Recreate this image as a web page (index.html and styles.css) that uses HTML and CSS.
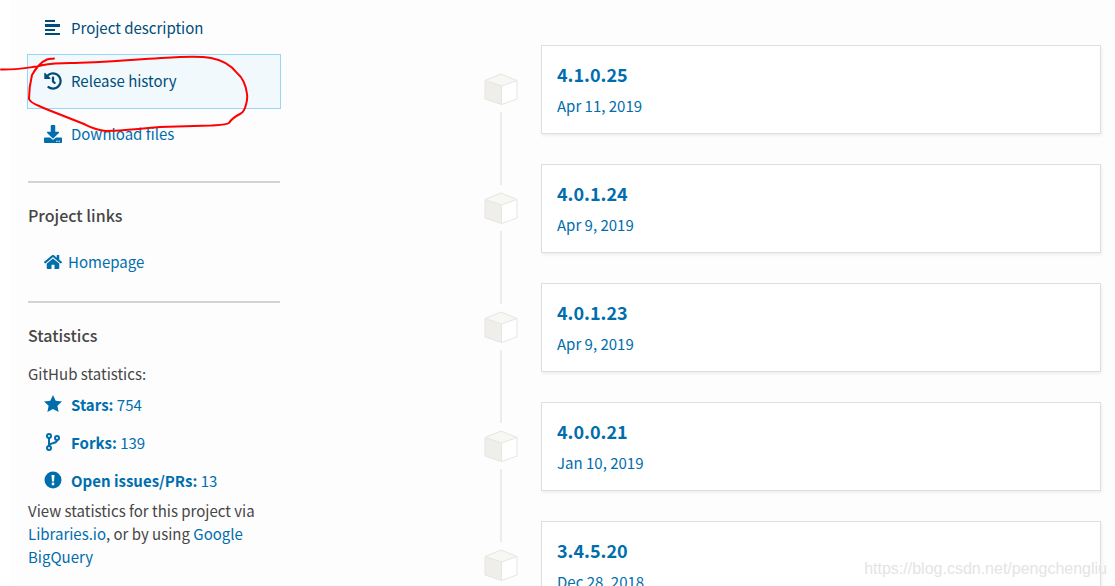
FILE: index.html
```html
<!DOCTYPE html>
<html lang="en">

<head>
    <meta charset="UTF-8">
    <meta name="viewport" content="width=device-width, initial-scale=1.0">
    <title>Release history</title>
    <link rel="stylesheet" href="styles.css">
</head>

<body>
    <!-- Shapes used more than once -->
    <svg class="sprite" aria-hidden="true">
        <symbol id="cube" viewBox="0 0 34 33">
            <path d="M1 7.500 17.500 13v18.500L1 26z" fill="#efeeea" />
            <path d="M17.500 13 33 7.500V26l-15.500 5.500z" fill="#fff" />
            <path d="M17 1 33 7.500 17.500 13 1 7.500z" fill="#f7f7f4" />
            <path d="M17 1 33 7.500V26l-15.500 5.500L1 26V7.500zM1 7.500 17.500 13 33 7.500M17.500 13v18" fill="none" stroke="#e5e5e1" />
        </symbol>
    </svg>

    <div class="page">
        <aside class="sidebar">
            <nav class="tabs">
                <a class="tab tab-dark" href="#description">
                    <svg class="icon" viewBox="0 0 18 18"><path d="M1 1h10v2H1zM1 5h15v3H1zM1 10h10v2H1zM1 14h15v2H1z" /></svg>
                    Project description
                </a>
                <a class="tab tab-dark tab-active" href="#history">
                    <svg class="icon" viewBox="0 0 512 512"><path d="M504 255.500c.3 136.600-111.200 248.400-247.800 248.500-59 0-113.200-20.500-155.800-54.900-11.100-8.900-11.900-25.500-1.800-35.600l11.300-11.300c8.600-8.600 22.400-9.600 31.900-2C173.100 425.100 212.800 440 256 440c101.700 0 184-82.300 184-184 0-101.700-82.300-184-184-184-48.800 0-93.100 19-126.100 49.900l50.800 50.800c10.100 10.100 2.900 27.300-11.300 27.300H24c-8.800 0-16-7.200-16-16V38.600c0-14.300 17.200-21.400 27.300-11.300l49.400 49.400C129.200 34.100 189.600 8 256 8c136.800 0 247.700 110.800 248 247.500zm-180.900 78.800 9.800-12.600c8.100-10.500 6.300-25.500-4.200-33.700L288 256.300V152c0-13.300-10.700-24-24-24h-16c-13.300 0-24 10.700-24 24v135.700l65.400 50.900c10.500 8.100 25.500 6.300 33.700-4.300z" /></svg>
                    Release history
                </a>
                <a class="tab" href="#files">
                    <svg class="icon" viewBox="0 0 512 512"><path d="M216 0h80c13.300 0 24 10.700 24 24v168h87.700c17.800 0 26.700 21.500 14.100 34.100L269.700 378.300c-7.500 7.500-19.800 7.500-27.300 0L90.100 226.100c-12.600-12.600-3.700-34.100 14.100-34.100H192V24c0-13.300 10.700-24 24-24zm296 376v112c0 13.300-10.700 24-24 24H24c-13.300 0-24-10.700-24-24V376c0-13.300 10.700-24 24-24h146.700l49 49c20.100 20.100 52.500 20.100 72.600 0l49-49H488c13.300 0 24 10.700 24 24zm-124 88c0-11-9-20-20-20s-20 9-20 20 9 20 20 20 20-9 20-20zm64 0c0-11-9-20-20-20s-20 9-20 20 9 20 20 20 20-9 20-20z" /></svg>
                    Download files
                </a>
            </nav>

            <section class="section">
                <h2>Project links</h2>
                <a class="home-link" href="#home">
                    <svg class="icon" viewBox="0 0 576 512"><path d="M488 312.700V456c0 13.300-10.700 24-24 24H348c-6.600 0-12-5.400-12-12V356c0-6.600-5.400-12-12-12h-72c-6.600 0-12 5.400-12 12v112c0 6.600-5.400 12-12 12H112c-13.300 0-24-10.700-24-24V312.700c0-3.600 1.600-7 4.400-9.300l188-154.800c4.400-3.600 10.800-3.600 15.300 0l188 154.800c2.700 2.300 4.300 5.700 4.300 9.300zm83.600-60.900L488 182.900V44.400c0-6.600-5.400-12-12-12h-56c-6.600 0-12 5.400-12 12V117l-89.500-73.700c-17.700-14.600-43.300-14.600-61 0L4.400 251.800c-5.100 4.200-5.800 11.800-1.600 16.900l25.500 31c4.200 5.100 11.800 5.800 16.900 1.600l235.200-193.700c4.400-3.600 10.800-3.600 15.300 0l235.200 193.700c5.100 4.200 12.700 3.500 16.900-1.600l25.500-31c4.200-5.200 3.400-12.700-1.700-16.900z" /></svg>
                    Homepage
                </a>
            </section>

            <section class="section">
                <h2>Statistics</h2>
                <p>GitHub statistics:</p>
                <ul class="stats">
                    <li>
                        <a class="stat" href="#stars">
                            <svg class="icon" viewBox="0 0 18 18"><path d="M9 0l2.700 5.700 6.300.8-4.600 4.300 1.200 6.300L9 14.100l-5.600 3 1.200-6.300L0 6.500l6.300-.8z" /></svg>
                            <span><strong>Stars:</strong> 754</span>
                        </a>
                    </li>
                    <li>
                        <a class="stat" href="#forks">
                            <svg class="icon" viewBox="0 0 18 18"><g fill="none" stroke="currentColor" stroke-width="2"><circle cx="5" cy="3" r="2" /><circle cx="5" cy="15" r="2" /><circle cx="13" cy="5" r="2" /><path d="M5 5v8M13 7c0 4-5 2-8 5" /></g></svg>
                            <span><strong>Forks:</strong> 139</span>
                        </a>
                    </li>
                    <li>
                        <a class="stat" href="#issues">
                            <svg class="icon" viewBox="0 0 18 18"><circle cx="9" cy="9" r="8.500" /><path d="M7.500 4h3L10 10.500H8z" fill="#fff" /><circle cx="9" cy="13" r="1.400" fill="#fff" /></svg>
                            <span><strong>Open issues/PRs:</strong> 13</span>
                        </a>
                    </li>
                </ul>
                <p>View statistics for this project via <a href="#libraries">Libraries.io</a>, or by using <a href="#bigquery">Google BigQuery</a></p>
            </section>
        </aside>

        <main class="releases">
            <div class="release">
                <div class="node"><svg class="cube"><use href="#cube" /></svg></div>
                <a class="card" href="#r1"><span class="version">4.1.0.25</span><time>Apr 11, 2019</time></a>
            </div>
            <div class="release">
                <div class="node"><svg class="cube"><use href="#cube" /></svg></div>
                <a class="card" href="#r2"><span class="version">4.0.1.24</span><time>Apr 9, 2019</time></a>
            </div>
            <div class="release">
                <div class="node"><svg class="cube"><use href="#cube" /></svg></div>
                <a class="card" href="#r3"><span class="version">4.0.1.23</span><time>Apr 9, 2019</time></a>
            </div>
            <div class="release">
                <div class="node"><svg class="cube"><use href="#cube" /></svg></div>
                <a class="card" href="#r4"><span class="version">4.0.0.21</span><time>Jan 10, 2019</time></a>
            </div>
            <div class="release">
                <div class="node"><svg class="cube"><use href="#cube" /></svg></div>
                <a class="card" href="#r5"><span class="version">3.4.5.20</span><time>Dec 28, 2018</time></a>
            </div>
        </main>
    </div>

    <!-- Hand-drawn marker around the active tab -->
    <svg class="marker" viewBox="0 0 260 140" aria-hidden="true">
        <path d="M1 69.500C14 70 25 68 37 66.500C48 63 56 63.500 70 63C98 63 140 59 180 57C192 56.500 203 56.500 211 58C222 60 231 65 237 73C243 78 246 86 247 94C248 101 246 104 245 108C243 111 244 112 240 114C236 116 232 118 229 123C226 125 218 125 211 125.500L160 127C140 129 122 131 106 131C95 130 90 127 84 124L46 109C38 105 31 104 29 99C29 91 30 83 32 75C36 68 41 62 47 59.500C50 58.500 52 59 54 58.500" />
    </svg>
    <div class="watermark">https://blog.csdn.net/pengchengliu</div>
</body>

</html>
```
FILE: styles.css
```css
* {
    box-sizing: border-box;
}

body {
    margin: 0;
    height: 100vh;
    overflow: hidden;
    position: relative;
    background-color: #fff;
    color: #464646;
    font-family: "Source Sans Pro", "Noto Sans CJK SC", sans-serif;
    font-size: 15px;
    line-height: 23px;
}

a {
    color: #006dad;
    text-decoration: none;
}

h2 {
    margin: 0 0 15px;
    font-size: 16px;
    line-height: 24px;
    font-weight: 500;
}

p {
    margin: 0;
}

.sprite {
    display: none;
}

.page {
    display: flex;
    gap: 204px;
    min-height: 100%;
    margin-left: 11px;
    padding: 0 14px 0 17px;
    background-color: #fdfdfd;
}

.icon {
    width: 18px;
    height: 18px;
    flex: none;
    fill: currentColor;
}

/* Sidebar */
.sidebar {
    width: 252px;
    flex: none;
}

.tabs {
    margin: 1px -1px 19px;
}

.tab {
    display: flex;
    align-items: center;
    gap: 9px;
    height: 55px;
    padding: 0 16px 2px;
    border: 1px solid transparent;
}

.tab + .tab {
    margin-top: -2px;
}

.tab-dark {
    color: #004d7a;
}

.tab-active {
    background-color: #f1f9fd;
    border-color: #94d7fa;
}

.section {
    padding: 20px 0 28px;
    border-top: 2px solid #d3d3d3;
}

.home-link {
    display: flex;
    align-items: center;
    gap: 6px;
    margin-top: 23px;
    padding-left: 16px;
}

.stats {
    margin: 0;
    padding: 0 0 0 16px;
    list-style: none;
}

.stat {
    display: flex;
    align-items: center;
    gap: 9px;
    height: 38px;
}

/* Release timeline */
.releases {
    flex: 1;
    padding-top: 45px;
}

.release {
    display: grid;
    grid-template-columns: 34px 1fr;
    gap: 23px;
    padding-bottom: 30px;
}

.node {
    display: flex;
    flex-direction: column;
    align-items: center;
    gap: 6px;
    margin: 28px 0 -51px;
}

.node::after {
    content: "";
    flex: 1;
    width: 2px;
    background-color: #ececec;
}

.cube {
    width: 34px;
    height: 33px;
    flex: none;
}

.card {
    display: flex;
    flex-direction: column;
    gap: 6px;
    align-self: start;
    padding: 15px 15px 16px;
    border: 1px solid #dedede;
    background-color: #fff;
    box-shadow: 1px 2px 3px rgba(0, 0, 0, 0.06);
}

.version {
    font-size: 18px;
    line-height: 27px;
    font-weight: 700;
}

/* Overlays */
.marker {
    position: absolute;
    top: 0;
    left: 0;
    width: 260px;
    height: 140px;
    pointer-events: none;
    fill: none;
    stroke: #f00;
    stroke-width: 2;
    stroke-linecap: round;
}

.watermark {
    position: absolute;
    right: 8px;
    bottom: 6px;
    color: #e4e4e4;
    font-family: "Liberation Sans", sans-serif;
    font-size: 16px;
}
```
